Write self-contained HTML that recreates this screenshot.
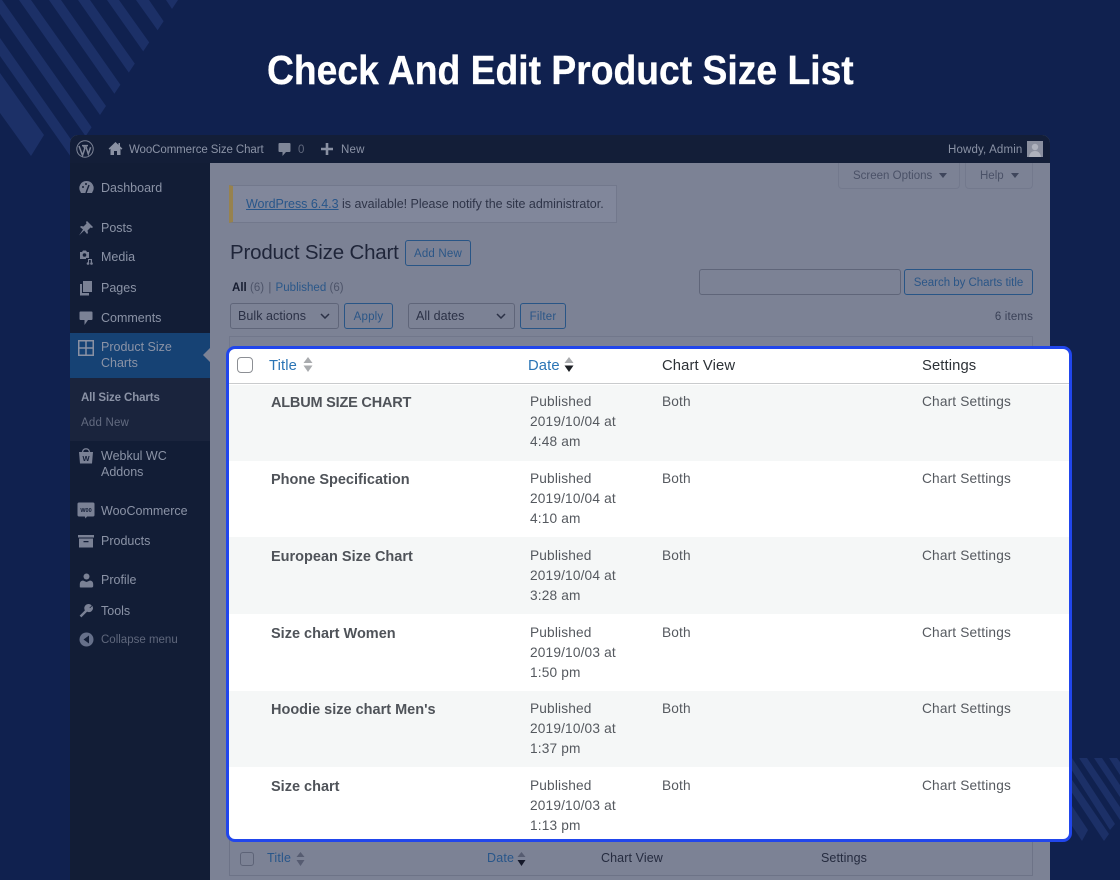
<!DOCTYPE html>
<html lang="en"><head><meta charset="utf-8"><title>Check And Edit Product Size List</title>
<style>
*{box-sizing:border-box}
html,body{margin:0;padding:0}
body{width:1120px;height:880px;position:relative;overflow:hidden;background:#10214f;font-family:"Liberation Sans",sans-serif}
.a,.t{position:absolute}
.t{white-space:nowrap;line-height:16px;height:16px}
svg{position:absolute;display:block}
h1{position:absolute;margin:0;left:267px;top:46px;font-size:41px;line-height:48px;font-weight:700;color:#fff;white-space:nowrap;transform-origin:0 50%;transform:scaleX(.909);-webkit-text-stroke:.3px #fff}
.m{left:101px;font-size:12.5px;color:#8b93a6;letter-spacing:0}
.b{color:#8b93a6;font-size:11.5px;letter-spacing:.2px}
.btn{position:absolute;border:1px solid #285586;border-radius:3px;color:#2b5687;font-size:11.5px;letter-spacing:.2px;text-align:center;line-height:26px;white-space:nowrap}
.sel{position:absolute;border:1px solid #5f6579;border-radius:3px;color:#2b3146;font-size:12.5px;letter-spacing:.05px;line-height:25px;padding-left:7px;white-space:nowrap}
.sel svg{right:8px;top:9px}
.tab{position:absolute;top:163px;height:26px;border:1px solid #73798d;border-top:0;border-radius:0 0 4px 4px;color:#4a5167;font-size:11.5px;line-height:26px;letter-spacing:0;padding-left:14px;white-space:nowrap}
#card{position:absolute;left:226px;top:346px;width:846px;height:496px;background:#fff;border:3px solid #2146ec;border-radius:9px;overflow:hidden}
.row{position:absolute;left:0;width:840px;color:#55595f;font-size:13.7px}
.row.g{background:#f5f7f7}
.row .t{line-height:20px;height:20px;letter-spacing:.16px}
.row b{position:absolute;left:42px;font-size:14.5px;line-height:20px;color:#4f5359;white-space:nowrap}
.d{left:301px}.c{left:433px}.s{left:693px}
.th{position:absolute;font-size:14.8px;line-height:18px;white-space:nowrap;letter-spacing:.1px}
</style></head><body>

<svg style="left:0;top:0" width="1120" height="880" fill="#1c3067">
<polygon points="178,0 172,9 166,0"/>
<polygon points="163.6,21.2 157.6,30.2 136,0 149,0"/>
<polygon points="149.2,42.4 143.2,51.4 107,0 119,0"/>
<polygon points="134.8,63.6 128.8,72.6 78,0 90,0"/>
<polygon points="120.4,84.8 114.4,93.8 49,0 61,0"/>
<polygon points="106,106 100,115 19,0 31,0"/>
<polygon points="91.6,127.2 85.6,136.2 0,14 0,0 2,0"/>
<polygon points="77,148 71,157 0,56 0,38"/>
<polygon points="44,135 31,156 0,113 0,73"/>
<polygon points="1079,758 1087,758 1120,807 1120,820"/>
<polygon points="1094,758 1102,758 1120,785 1120,797"/>
<polygon points="1109,758 1117,758 1120,762 1120,775"/>
<polygon points="1064,758 1072,758 1115,824 1110,830"/>
<polygon points="1049,758 1057,758 1109,834 1104,841"/>
<polygon points="1027,758 1040,758 1088,830 1082,841"/>
</svg>

<h1>Check And Edit Product Size List</h1>

<!-- dimmed admin -->
<div class="a" style="left:70px;top:135px;width:980px;height:745px;background:#7c8295;border-radius:8px 8px 0 0;overflow:hidden">
  <div class="a" style="left:0;top:0;width:980px;height:28px;background:#131e38"></div>
  <div class="a" style="left:0;top:28px;width:140px;height:717px;background:#121d36"></div>
  <div class="a" style="left:0;top:198px;width:140px;height:45px;background:#164274"></div>
  <div class="a" style="left:0;top:243px;width:140px;height:63px;background:#1a243d"></div>
  <svg style="left:133px;top:213px" width="7" height="14"><polygon points="7,0 0,7 7,14" fill="#7c8295"/></svg>
</div>

<!-- admin bar -->
<svg style="left:76px;top:140px" width="18" height="18" viewBox="0 0 18 18" fill="none" stroke="#7f8698"><circle cx="9" cy="9" r="8.2" stroke-width="1"/><path d="M3 6 6.5 15.5 8.8 8.5 7.6 5.6M6 5.6h6M9.6 5.6 12.3 14 14.6 7.2" stroke-width="1.5"/></svg>
<svg style="left:108px;top:141px" width="15" height="15" viewBox="0 0 15 15" fill="#8a91a3"><path d="M7.5 1 .6 7.6 1.6 8.6 2.5 7.8V14H6V10H9V14H12.5V7.8L13.4 8.6 14.4 7.6 12 5.3V2H10.5V3.9Z"/></svg>
<div class="t b" style="left:129px;top:142px;letter-spacing:-.09px">WooCommerce Size Chart</div>
<svg style="left:278px;top:142px" width="13" height="15" viewBox="0 0 13 15" fill="#7f8698"><path d="M1.5 1H11.5Q12.5 1 12.5 2V9Q12.5 10 11.5 10H8L4.5 14V10H1.5Q.5 10 .5 9V2Q.5 1 1.5 1Z"/></svg>
<div class="t b" style="left:298px;top:142px;color:#5f677c">0</div>
<svg style="left:321px;top:143px" width="12" height="12" fill="#8a91a3"><path d="M4.7 0H7.3V4.7H12V7.3H7.3V12H4.7V7.3H0V4.7H4.7Z"/></svg>
<div class="t b" style="left:341px;top:142px">New</div>
<div class="t b" style="left:948px;top:142px;letter-spacing:.15px">Howdy, Admin</div>
<svg style="left:1027px;top:141px" width="16" height="16"><rect width="16" height="16" fill="#8a8f9e"/><circle cx="8" cy="6" r="3.2" fill="#aeb2bd"/><path d="M2 16Q3 10 8 10T14 16Z" fill="#aeb2bd"/></svg>

<!-- sidebar icons -->
<svg style="left:79px;top:180px" width="15" height="15" viewBox="0 0 15 15" fill="#7a8195"><path d="M7.5 1A7 7 0 0 0 1.3 11.5L2 13H13L13.7 11.5A7 7 0 0 0 7.5 1Z"/><path d="M7 13 10 5" stroke="#121d36" stroke-width="1.4"/><circle cx="4" cy="7" r="1" fill="#121d36"/><circle cx="7" cy="4" r="1" fill="#121d36"/></svg>
<svg style="left:78px;top:220px" width="16" height="16" viewBox="0 0 16 16" fill="#7a8195"><path d="M9 1 15 7 14 8 12.5 7.5 9.5 10.5 10 13 9 14 6.2 10.5 1 15.5 5 9.5 2 7 3 6 5.500 6.500 8.500 3.500 8 2Z"/></svg>
<svg style="left:78px;top:249px" width="16" height="16" viewBox="0 0 16 16" fill="#7a8195"><path d="M2 3H4L5 1.500H8L9 3H11V9H8V10H2Z"/><circle cx="6.500" cy="6" r="1.800" fill="#121d36"/><path d="M10 10H14V14.500H12.800V11H11V14.500H10Z"/><circle cx="10" cy="14.500" r="1.300"/><circle cx="13.500" cy="14.500" r="1.300"/></svg>
<svg style="left:79px;top:281px" width="14" height="15" viewBox="0 0 14 15" fill="#7a8195"><path d="M4 0H13V11H4Z"/><path d="M1 3H3V12H10V14.500H1Z"/></svg>
<svg style="left:79px;top:311px" width="14" height="15" viewBox="0 0 14 15" fill="#7a8195"><path d="M1.500 .5H12.500Q13.500 .5 13.500 1.500V8Q13.500 9 12.500 9H9L5.500 14V9H1.500Q.5 9 .5 8V1.500Q.5 .5 1.500 .5Z"/></svg>
<svg style="left:78px;top:340px" width="16" height="16" fill="none" stroke="#8a91a3" stroke-width="1.500"><rect x=".75" y=".75" width="14.500" height="14.500"/><path d="M8 1V15M1 8H15"/></svg>
<svg style="left:78px;top:448px" width="16" height="16" viewBox="0 0 16 16" fill="#7a8195"><path d="M1 4H15L14 15.500H2Z"/><path d="M4.500 4Q5 .8 8 .8T11.500 4" fill="none" stroke="#7a8195" stroke-width="1.300"/><text x="8" y="13" font-size="7.500" font-weight="700" text-anchor="middle" fill="#121d36" font-family="Liberation Sans">W</text></svg>
<svg style="left:77px;top:502px" width="18" height="18" viewBox="0 0 18 18"><path d="M2 .5H16Q17.500 .5 17.500 2V13Q17.500 14.500 16 14.500H10L8.500 16.500 7.800 14.500H2Q.5 14.500 .5 13V2Q.5 .5 2 .5Z" fill="#7a8195"/><text x="9" y="10" font-size="5.500" font-weight="700" text-anchor="middle" fill="#121d36" font-family="Liberation Sans">W00</text></svg>
<svg style="left:78px;top:535px" width="16" height="13" viewBox="0 0 16 13" fill="#7a8195"><rect x="0" y="0" width="16" height="2.500"/><path d="M1 3.500H15V12.500H1ZM5.500 6V7.200H10.500V6Z" fill-rule="evenodd"/></svg>
<svg style="left:79px;top:573px" width="15" height="15" viewBox="0 0 15 15" fill="#7a8195"><circle cx="7.500" cy="3.500" r="3"/><path d="M.8 14V11Q.8 8 4 7.500L7.500 9 11 7.500Q14.200 8 14.200 11V13Q14.200 14.500 12.500 14.500H2.500Q.8 14.500 .8 14Z"/></svg>
<svg style="left:79px;top:603px" width="15" height="15" viewBox="0 0 15 15" fill="none" stroke="#7a8195" stroke-width="2.400"><path d="M1.500 13.500 7.500 7.500"/><path d="M7 8A3.500 3.500 0 0 1 12 2.500L9.800 4.800 11 6 13.200 3.800A3.500 3.500 0 0 1 8 8" fill="#7a8195" stroke-width="1"/></svg>
<svg style="left:79px;top:632px" width="15" height="15" viewBox="0 0 15 15"><circle cx="7.500" cy="7.500" r="7" fill="#66708a"/><polygon points="10,3.500 4.500,7.500 10,11.500" fill="#121d36"/></svg>

<!-- sidebar text -->
<div class="t m" style="top:180px">Dashboard</div>
<div class="t m" style="top:220px">Posts</div>
<div class="t m" style="top:249px">Media</div>
<div class="t m" style="top:280px">Pages</div>
<div class="t m" style="top:310px">Comments</div>
<div class="t m" style="top:339px">Product Size</div>
<div class="t m" style="top:355px">Charts</div>
<div class="t" style="left:81px;top:390px;font-size:11.500px;font-weight:700;color:#8b93a6;letter-spacing:-.12px">All Size Charts</div>
<div class="t" style="left:81px;top:415px;font-size:11.500px;color:#636b80;letter-spacing:.2px">Add New</div>
<div class="t m" style="top:448px">Webkul WC</div>
<div class="t m" style="top:464px">Addons</div>
<div class="t m" style="top:503px">WooCommerce</div>
<div class="t m" style="top:533px">Products</div>
<div class="t m" style="top:572px">Profile</div>
<div class="t m" style="top:603px">Tools</div>
<div class="t" style="left:101px;top:632px;font-size:11.500px;color:#5f677c;letter-spacing:0">Collapse menu</div>

<!-- top tabs -->
<div class="tab" style="left:838px;width:122px">Screen Options<svg style="left:100px;top:10px" width="8" height="5"><polygon points="0,0 8,0 4,5" fill="#3f465c"/></svg></div>
<div class="tab" style="left:965px;width:68px">Help<svg style="left:45px;top:10px" width="8" height="5"><polygon points="0,0 8,0 4,5" fill="#3f465c"/></svg></div>

<!-- notice -->
<div class="a" style="left:229px;top:185px;width:388px;height:38px;background:#81879b;border:1px solid #72788c;border-left:4px solid #97824e"></div>
<div class="t" style="left:246px;top:195.500px;font-size:12.500px;color:#2e3448;letter-spacing:-.02px"><span style="color:#28568a;text-decoration:underline">WordPress 6.4.3</span> is available! Please notify the site administrator.</div>

<div class="t" style="left:230px;top:241px;height:24px;line-height:24px;font-size:20.500px;color:#1f2539;letter-spacing:-.19px">Product Size Chart</div>
<div class="btn" style="left:405px;top:240px;width:66px;height:26px">Add New</div>

<div class="t" style="left:232px;top:280px;font-size:11.500px;color:#4d5469;letter-spacing:.02px"><b style="color:#161c30">All</b> (6) <span style="color:#4d5469;margin:0 1px"> | </span> <span style="color:#2a5789">Published</span> (6)</div>

<div class="sel" style="left:230px;top:303px;width:109px;height:26px">Bulk actions<svg width="10" height="6" fill="none" stroke="#2b3146" stroke-width="1.500"><path d="M1 1 5 5 9 1"/></svg></div>
<div class="btn" style="left:344px;top:303px;width:49px;height:26px">Apply</div>
<div class="sel" style="left:408px;top:303px;width:107px;height:26px">All dates<svg width="10" height="6" fill="none" stroke="#2b3146" stroke-width="1.500"><path d="M1 1 5 5 9 1"/></svg></div>
<div class="btn" style="left:520px;top:303px;width:46px;height:26px">Filter</div>

<div class="a" style="left:699px;top:269px;width:202px;height:26px;border:1px solid #5f6579;border-radius:3px"></div>
<div class="btn" style="left:904px;top:269px;width:129px;height:26px;letter-spacing:-.02px">Search by Charts title</div>
<div class="t" style="right:87px;top:309px;font-size:11.500px;color:#3a4157;letter-spacing:.15px">6 items</div>

<div class="a" style="left:229px;top:336px;width:804px;height:20px;border:1px solid #71778b"></div>

<!-- footer of table -->
<div class="a" style="left:229px;top:835px;width:804px;height:41px;border:1px solid #6d7387"></div>
<div class="a" style="left:240px;top:852px;width:14px;height:14px;border:1px solid #5d6377;border-radius:3px"></div>
<div class="t" style="left:267px;top:850px;font-size:12.500px;color:#28568a;letter-spacing:.2px">Title</div>
<svg style="left:296px;top:852px" width="9" height="14"><polygon points="4.500,0 8.500,5 .5,5" fill="#565c71"/><polygon points="4.500,14 8.500,8 .5,8" fill="#565c71"/></svg>
<div class="t" style="left:487px;top:850px;font-size:12.500px;color:#28568a;letter-spacing:.2px">Date</div>
<svg style="left:517px;top:852px" width="9" height="14"><polygon points="4.500,0 8.500,5 .5,5" fill="#565c71"/><polygon points="4.500,14 8.500,8 .5,8" fill="#15192a"/></svg>
<div class="t" style="left:601px;top:850px;font-size:12.500px;color:#252b3f;letter-spacing:.1px">Chart View</div>
<div class="t" style="left:821px;top:850px;font-size:12.500px;color:#252b3f;letter-spacing:.1px">Settings</div>

<!-- highlighted card -->
<div id="card">
  <div class="a" style="left:0;top:0;width:840px;height:35px;border-bottom:1px solid #c9cbcd"></div>
  <div class="a" style="left:8px;top:8px;width:16px;height:16px;border:1px solid #8c8f94;border-radius:4px"></div>
  <div class="th" style="left:40px;top:8px;color:#2a74b5">Title</div>
  <svg style="left:74px;top:8px" width="10" height="15"><polygon points="5,0 9.500,6 .5,6" fill="#a9abae"/><polygon points="5,15 9.500,8.500 .5,8.500" fill="#a9abae"/></svg>
  <div class="th" style="left:299px;top:8px;color:#2a74b5">Date</div>
  <svg style="left:335px;top:8px" width="10" height="15"><polygon points="5,0 9.500,6 .5,6" fill="#a9abae"/><polygon points="5,15 9.500,8.500 .5,8.500" fill="#1c1f24"/></svg>
  <div class="th" style="left:433px;top:8px;color:#2c3136">Chart View</div>
  <div class="th" style="left:693px;top:8px;color:#2c3136">Settings</div>

  <div class="row g" style="top:36px;height:76px"><b style="top:8px;letter-spacing:-.2px">ALBUM SIZE CHART</b><div class="t d" style="top:7px">Published</div><div class="t d" style="top:27px">2019/10/04 at</div><div class="t d" style="top:47px">4:48 am</div><div class="t c" style="top:7px">Both</div><div class="t s" style="top:7px">Chart Settings</div></div>
  <div class="row" style="top:112px;height:77px"><b style="top:9px">Phone Specification</b><div class="t d" style="top:8px">Published</div><div class="t d" style="top:28px">2019/10/04 at</div><div class="t d" style="top:48px">4:10 am</div><div class="t c" style="top:8px">Both</div><div class="t s" style="top:8px">Chart Settings</div></div>
  <div class="row g" style="top:188px;height:77px"><b style="top:10px">European Size Chart</b><div class="t d" style="top:9px">Published</div><div class="t d" style="top:29px">2019/10/04 at</div><div class="t d" style="top:49px">3:28 am</div><div class="t c" style="top:9px">Both</div><div class="t s" style="top:9px">Chart Settings</div></div>
  <div class="row" style="top:265px;height:77px"><b style="top:10px">Size chart Women</b><div class="t d" style="top:9px">Published</div><div class="t d" style="top:29px">2019/10/03 at</div><div class="t d" style="top:49px">1:50 pm</div><div class="t c" style="top:9px">Both</div><div class="t s" style="top:9px">Chart Settings</div></div>
  <div class="row g" style="top:342px;height:76px"><b style="top:9px">Hoodie size chart Men's</b><div class="t d" style="top:8px">Published</div><div class="t d" style="top:28px">2019/10/03 at</div><div class="t d" style="top:48px">1:37 pm</div><div class="t c" style="top:8px">Both</div><div class="t s" style="top:8px">Chart Settings</div></div>
  <div class="row" style="top:418px;height:72px"><b style="top:10px">Size chart</b><div class="t d" style="top:9px">Published</div><div class="t d" style="top:29px">2019/10/03 at</div><div class="t d" style="top:49px">1:13 pm</div><div class="t c" style="top:9px">Both</div><div class="t s" style="top:9px">Chart Settings</div></div>
</div>
</body></html>
